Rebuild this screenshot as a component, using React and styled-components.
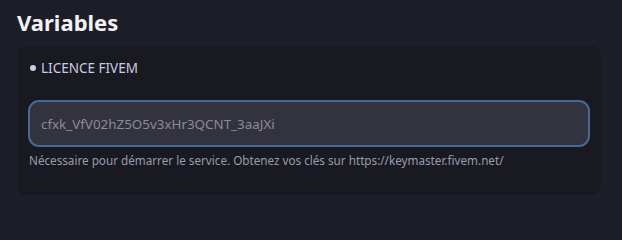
import React from "react";
import styled, { createGlobalStyle } from "styled-components";

const GlobalStyle = createGlobalStyle`
  html, body {
    margin: 0;
    padding: 0;
    background: #1e1e29;
  }
  body {
    font-family: "Noto Sans", "Open Sans", sans-serif;
    color: #e6e6f0;
  }
`;

const Page = styled.div`
  width: 622px;
  height: 224px;
  padding: 6px 21px 0 17px;
  box-sizing: border-box;
`;

const Title = styled.h2`
  margin: 0 0 8px;
  font-size: 22px;
  line-height: 32px;
  font-weight: 700;
  color: #f2f2f7;
`;

const Card = styled.section`
  background: #191922;
  border-radius: 9px;
  padding: 12px 11px 27px 11px;
  display: flex;
  flex-direction: column;
`;

const Label = styled.div`
  display: flex;
  align-items: center;
  gap: 5px;
  padding-left: 2px;
  font-size: 13.5px;
  line-height: 20px;
  color: #c9cce4;
  text-transform: uppercase;
  margin-bottom: 22px;

  &::before {
    content: "";
    width: 6px;
    height: 6px;
    border-radius: 50%;
    background: #c9cce4;
  }
`;

const Input = styled.input`
  box-sizing: border-box;
  width: 100%;
  height: 47px;
  padding: 0 11px;
  border: 2px solid #4a6797;
  border-radius: 11px;
  background: #33323f;
  color: #8b8b9a;
  font-family: inherit;
  font-size: 13.4px;
  outline: none;
  caret-color: #ffffff;
`;

const Help = styled.p`
  margin: 5px 0 0 1px;
  font-size: 11.7px;
  line-height: 16px;
  color: #9b9bab;
`;

export default function App() {
  return (
    <>
      <GlobalStyle />
      <Page>
        <Title>Variables</Title>
        <Card>
          <Label>Licence FiveM</Label>
          <Input defaultValue="cfxk_VfV02hZ5O5v3xHr3QCNT_3aaJXi" />
          <Help>
            Nécessaire pour démarrer le service. Obtenez vos clés sur
            https://keymaster.fivem.net/
          </Help>
        </Card>
      </Page>
    </>
  );
}
